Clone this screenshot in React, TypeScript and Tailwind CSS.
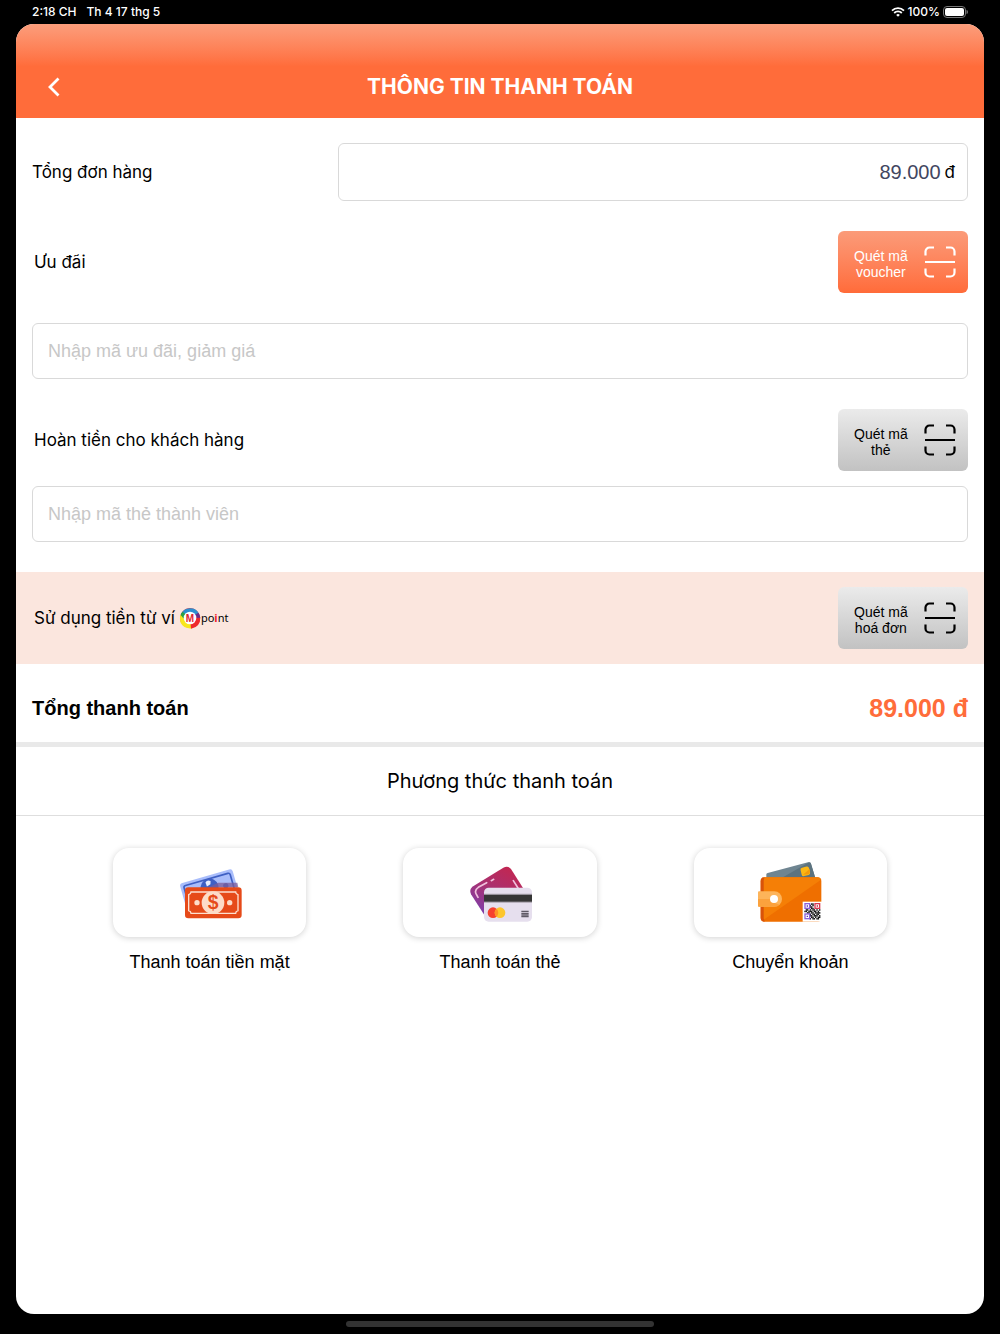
import { useState } from "react";

interface ScanButtonProps {
  line1: string;
  line2: string;
  primary?: boolean;
}

interface PaymentMethod {
  Icon: React.ComponentType;
  label: string;
}

const labelClass = "text-[17px] leading-6 font-[Inter,sans-serif]";
const inputClass =
  "block w-full h-14 rounded-md border border-[#d9d9d9] px-[15px] text-lg text-black placeholder:text-[#c7c7c7] outline-none";

// 1 = dark module, the three finder corners are drawn on top
const qrRows = [
  "000001100000",
  "000010100000",
  "000011000000",
  "000001100000",
  "011010110101",
  "110111011010",
  "001101101111",
  "000010110110",
  "000011011101",
  "000001101011",
  "000010110110",
];

function ScanIcon() {
  return (
    <svg width="32" height="32" viewBox="0 0 32 32" fill="none" stroke="currentColor" strokeWidth="2.2" aria-hidden="true">
      <path d="M1.5 9.5v-4a4 4 0 0 1 4-4H10M22 1.500h4.500a4 4 0 0 1 4 4v4M1.500 22.500v4a4 4 0 0 0 4 4H10M22 30.500h4.500a4 4 0 0 0 4-4v-4M1 16h30" />
    </svg>
  );
}

function ScanButton({ line1, line2, primary }: ScanButtonProps) {
  return (
    <button
      type="button"
      className={
        primary
          ? "flex w-[130px] h-[62px] items-center justify-between rounded-md pl-4 pr-3 bg-linear-to-b from-[#fb9b79] to-[#ff6b39] text-white"
          : "flex w-[130px] h-[62px] items-center justify-between rounded-md pl-4 pr-3 bg-linear-to-b from-[#ebebeb] to-[#c2c2c2] text-black"
      }
    >
      <span className="pt-1 text-sm leading-4 text-center">
        {line1}
        <br />
        {line2}
      </span>
      <ScanIcon />
    </button>
  );
}

function CashIcon() {
  return (
    <svg width="64" height="64" viewBox="54 31 192 192" aria-hidden="true">
      <g transform="rotate(-16 145 115)">
        <rect x="66" y="76" width="164" height="90" rx="9" fill="#a9bdfb" />
        <rect x="76" y="86" width="144" height="70" rx="6" fill="none" stroke="#3f60c4" strokeWidth="5" />
        <circle cx="150" cy="112" r="27" fill="#3f60c4" />
        <path d="M142 94q8-8 16 0l-3 9-12 4z" fill="#e6edff" />
        <circle cx="198" cy="120" r="8" fill="#3f60c4" />
      </g>
      <path d="M146 110l28-14h58l3 14z" fill="#7b5c99" opacity=".75" />
      <rect x="75" y="110" width="170" height="93" rx="10" fill="#e64a19" />
      <path d="M93 124h134q0 6 7 8v48q-7 2-7 8H93q0-6-7-8v-48q7-2 7-8z" fill="none" stroke="#fde0d0" strokeWidth="4" />
      <circle cx="159" cy="156" r="34" fill="#fddcc8" />
      <circle cx="111" cy="156" r="8" fill="#fddcc8" />
      <circle cx="209" cy="156" r="8" fill="#fddcc8" />
      <text x="159" y="174" textAnchor="middle" fontSize="58" fontWeight="700" fontFamily="Liberation Sans" fill="#e64a19">
        $
      </text>
    </svg>
  );
}

function CardIcon() {
  return (
    <svg width="64" height="64" viewBox="54 31 192 192" aria-hidden="true">
      <defs>
        <linearGradient id="cardBack" x1="0.8" y1="0" x2="0.2" y2="1">
          <stop offset="0" stopColor="#c4264f" />
          <stop offset="0.5" stopColor="#a93070" />
          <stop offset="1" stopColor="#7b3fae" />
        </linearGradient>
      </defs>
      <path d="M67 108L160 51q14-7 23 4l38 60-118 78-40-62q-6-14 4-23z" fill="url(#cardBack)" />
      <path d="M110 96L85 110q-12 8-7 19l6 11M124 90l7-4M190 90l14 22" fill="none" stroke="#f0bfdc" strokeWidth="5" strokeLinecap="round" />
      <rect x="102" y="111" width="144" height="102" rx="14" fill="#e6dfee" />
      <path d="M102 129h144v3H102zM102 153h144v3H102z" fill="#aaa4ae" />
      <path d="M102 132h144v21H102z" fill="#363636" />
      <circle cx="129" cy="186" r="16" fill="#f6402f" />
      <circle cx="150" cy="186" r="16" fill="#fdc62c" />
      <path d="M139.5 174a16 16 0 0 1 0 24 16 16 0 0 1 0-24z" fill="#ff9226" />
      <path d="M214 180h22v5h-22zM214 187h22v5h-22zM214 194h22v6h-22z" fill="#5f5a66" />
    </svg>
  );
}

function WalletIcon() {
  return (
    <svg width="64" height="64" viewBox="54 31 192 192" aria-hidden="true">
      <path d="M79 71q0-3 4-4l121-32q7-2 9 4l13 44H79z" fill="#6f8591" />
      <path d="M125 82l82-47q5 0 6 4l13 43z" fill="#5c737f" />
      <rect x="183" y="49" width="26" height="26" rx="6" fill="#fdb713" transform="rotate(-14 196 62)" />
      <path d="M189 72l20-17q3 12-4 16z" fill="#f59a0a" />
      <path d="M74 80h159q11 0 11 11v111q0 11-11 11H74q-12 0-12-12V92q0-12 12-12z" fill="#ef6f00" />
      <path d="M76 80h157q8 0 9 8L70 208V86q0-6 6-6z" fill="#f57f06" />
      <path d="M74 80q-12 0-12 12v109q0 12 12 12l-3-10V88z" fill="#d9530a" />
      <path d="M57 122h46a23 23 0 0 1 0 46H57q-3 0-3-3v-40q0-3 3-3z" fill="#fdb45a" />
      <path d="M54 145h37a11 11 0 0 0 11 11l16 6q-6 6-15 6H57q-3 0-3-3z" fill="#fba23d" />
      <circle cx="102" cy="145" r="12" fill="#fff" />
      <rect x="188" y="153" width="58" height="60" fill="#fff" />
      {qrRows.map((row, y) =>
        row.split("").map((cell, x) =>
          cell === "1" ? <rect key={x + "-" + y} x={193 + x * 4} y={158 + y * 4.4} width="4.2" height="4.6" fill="#161616" /> : null
        )
      )}
      <g fill="none" strokeWidth="4">
        <rect x="195" y="159" width="14" height="14" stroke="#8a62d8" />
        <rect x="225" y="159" width="14" height="14" stroke="#d93a55" />
        <rect x="195" y="190" width="14" height="14" stroke="#8a62d8" />
      </g>
      <path d="M200 164h4v4h-4zM200 195h4v4h-4z" fill="#5b35b0" />
      <path d="M230 164h4v4h-4z" fill="#c01f3c" />
    </svg>
  );
}

function PointLogo() {
  return (
    <span className="flex items-center">
      <svg width="22" height="22" viewBox="0 0 66 66" aria-hidden="true">
        <circle cx="33" cy="33" r="30" fill="#e8262d" />
        <path d="M6 22A30 30 0 0 1 60 20L33 33z" fill="#2d8fd0" />
        <path d="M4 24Q-3 62 38 65L33 33z" fill="#f8e71c" />
        <path d="M5 24q1-6 6-10l22 19L13 34z" fill="#2ba04a" />
        <path d="M58 17q7 8 6 16L33 33z" fill="#6d2c86" />
        <path d="M64 32q0 28-28 33L33 33z" fill="#ee2a2c" />
        <circle cx="33" cy="33" r="19" fill="#fff" />
        <text x="33" y="44" textAnchor="middle" fontSize="30" fontWeight="700" fontFamily="Liberation Sans" fill="#e3262e">
          M
        </text>
      </svg>
      <span className="font-['Noto_Sans',sans-serif] text-[11px] leading-4">
        po<span className="font-bold text-[#f0202a]">i</span>nt
      </span>
    </span>
  );
}

const methods: PaymentMethod[] = [
  { Icon: CashIcon, label: "Thanh toán tiền mặt" },
  { Icon: CardIcon, label: "Thanh toán thẻ" },
  { Icon: WalletIcon, label: "Chuyển khoản" },
];

function StatusBar() {
  return (
    <div className="flex h-6 items-center justify-between px-8 text-xs font-medium text-white font-[Inter,sans-serif]">
      <div className="flex gap-2.5">
        <span>2:18 CH</span>
        <span>Th 4 17 thg 5</span>
      </div>
      <div className="flex items-center gap-[3px]">
        <svg width="14" height="10" viewBox="0 0 14 10" fill="none" stroke="#fff" strokeWidth="1.8" aria-hidden="true">
          <path d="M1 3.600a8.500 8.500 0 0 1 12 0M3.200 6a5.400 5.400 0 0 1 7.600 0" />
          <path d="M7 9.800L5.200 8a2.500 2.500 0 0 1 3.600 0z" fill="#fff" stroke="none" />
        </svg>
        <span>100%</span>
        <svg width="25" height="12" viewBox="0 0 25 12" aria-hidden="true">
          <rect x="0.5" y="0.5" width="22" height="11" rx="3.5" fill="none" stroke="#777" />
          <rect x="2" y="2" width="19" height="8" rx="2" fill="#fff" />
          <path d="M23.5 4q1.500 0 1.500 2t-1.500 2z" fill="#777" />
        </svg>
      </div>
    </div>
  );
}

export default function App() {
  const [total, setTotal] = useState("89.000");

  return (
    <div className="flex min-h-screen flex-col bg-black font-['Liberation_Sans',Arial,sans-serif] text-black">
      <StatusBar />
      <main className="mx-4 flex-1 overflow-hidden rounded-[18px] bg-white">
        <header className="grid grid-cols-[80px_1fr_80px] items-center bg-linear-to-b from-[#fb9d7b] to-[#ff6c3a] to-45% pt-8 text-white">
          <button type="button" aria-label="Quay lại" className="flex h-[62px] items-center pl-8">
            <svg width="12" height="20" viewBox="0 0 12 20" fill="none" stroke="currentColor" strokeWidth="2.8" aria-hidden="true">
              <path d="M10.5 1.500L2 10l8.500 8.500" />
            </svg>
          </button>
          <h1 className="text-center text-[21px] leading-7 font-bold font-[Inter,sans-serif]">THÔNG TIN THANH TOÁN</h1>
        </header>

        <div className="flex items-center px-4 pt-[25px]">
          <label htmlFor="total" className={labelClass + " w-[306px]"}>
            Tổng đơn hàng
          </label>
          <div className="flex h-[58px] flex-1 items-center gap-1 rounded-md border border-[#d9d9d9] px-3">
            <input
              id="total"
              value={total}
              onChange={(e) => setTotal(e.target.value)}
              className="min-w-0 flex-1 text-right text-xl text-[#42465f] outline-none"
            />
            <span className={labelClass}>đ</span>
          </div>
        </div>

        <div className="flex items-center justify-between pt-[30px] pl-[18px] pr-4">
          <label htmlFor="voucher" className={labelClass}>
            Ưu đãi
          </label>
          <ScanButton primary line1="Quét mã" line2="voucher" />
        </div>
        <div className="px-4 pt-[30px]">
          <input id="voucher" className={inputClass} placeholder="Nhập mã ưu đãi, giảm giá" />
        </div>

        <div className="flex items-center justify-between pt-[30px] pl-[18px] pr-4">
          <label htmlFor="member" className={labelClass}>
            Hoàn tiền cho khách hàng
          </label>
          <ScanButton line1="Quét mã" line2="thẻ" />
        </div>
        <div className="px-4 pt-[15px]">
          <input id="member" className={inputClass} placeholder="Nhập mã thẻ thành viên" />
        </div>

        <div className="mt-[30px] flex items-center justify-between bg-[#fbe6de] py-[15px] pl-[18px] pr-4">
          <div className="flex items-center gap-1">
            <span className={labelClass}>Sử dụng tiền từ ví</span>
            <PointLogo />
          </div>
          <ScanButton line1="Quét mã" line2="hoá đơn" />
        </div>

        <div className="flex items-center justify-between border-b-5 border-[#e9e9e9] px-4 pt-[26px] pb-4 font-bold">
          <span className="text-xl">Tổng thanh toán</span>
          <span className="text-[25px] leading-9 text-[#ff6c3a]">89.000 đ</span>
        </div>

        <h2 className="border-b border-[#dedede] py-5 text-center text-xl leading-7 font-[Inter,sans-serif]">
          Phương thức thanh toán
        </h2>

        <div className="flex justify-evenly pt-8">
          {methods.map((method) => (
            <button
              key={method.label}
              type="button"
              className="flex w-1/5 flex-col items-center gap-[11px] text-lg leading-7 whitespace-nowrap"
            >
              <span className="flex h-[89px] w-full items-center justify-center rounded-2xl bg-white shadow-[0_1px_6px_rgba(0,0,0,0.18)]">
                <method.Icon />
              </span>
              {method.label}
            </button>
          ))}
        </div>
      </main>
      <div className="flex h-5 items-center justify-center">
        <div className="h-1.5 w-[308px] rounded-full bg-[#333]" />
      </div>
    </div>
  );
}
